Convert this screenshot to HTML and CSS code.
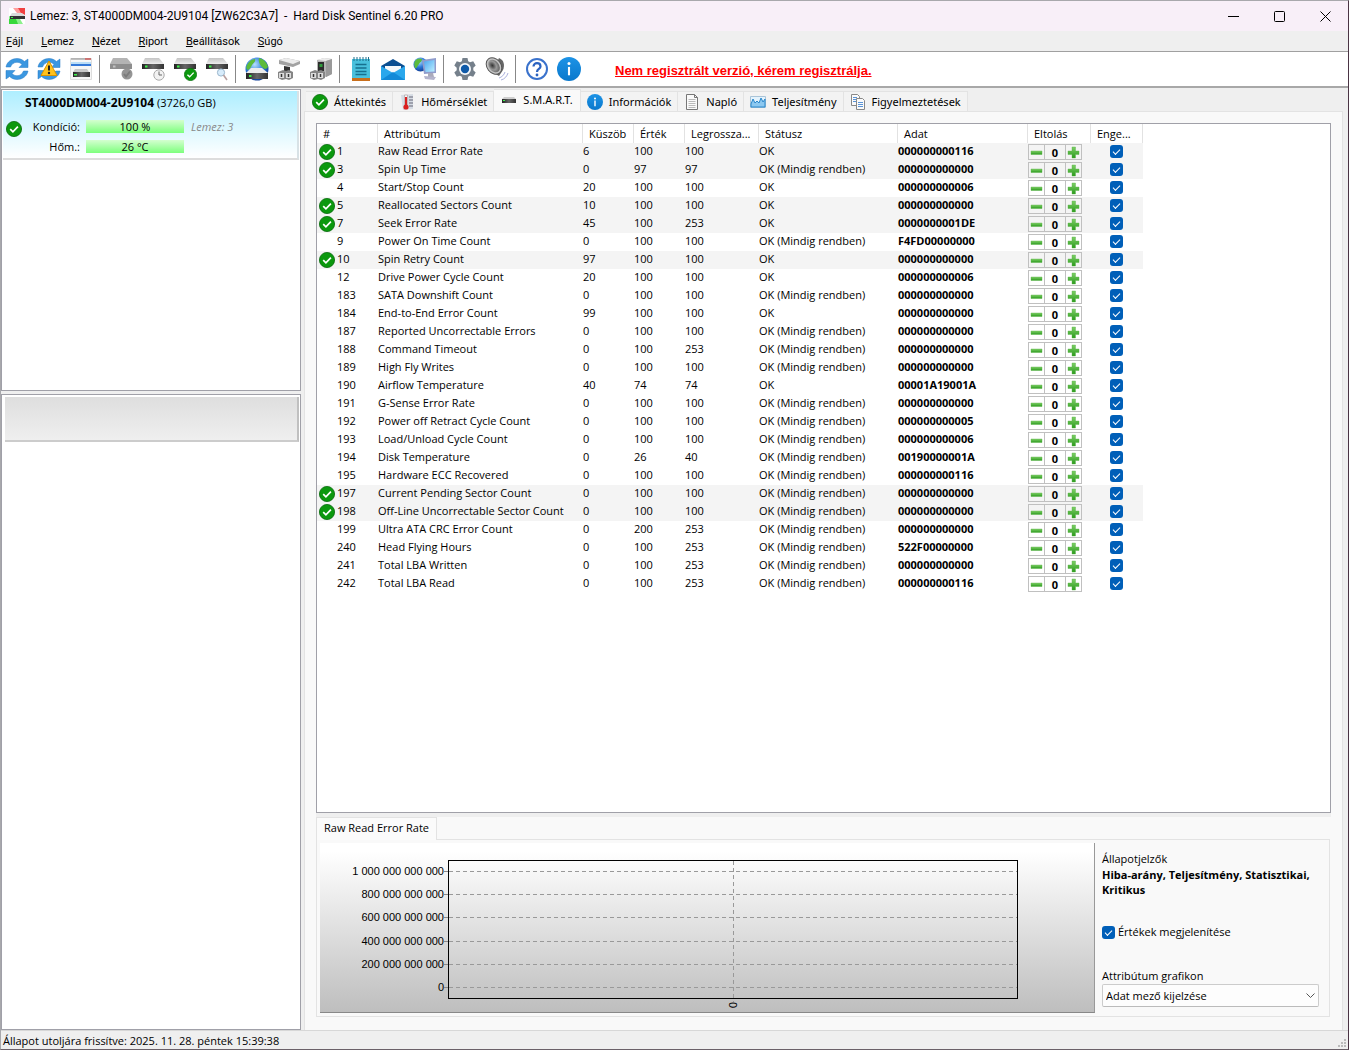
FILE: index.html
```html
<!DOCTYPE html>
<html lang="hu">
<head>
    <meta charset="UTF-8">
    <meta name="viewport" content="width=device-width, initial-scale=1.0">
    <title>Hard Disk Sentinel 6.20 PRO</title>
    <link rel="stylesheet" href="styles.css">
</head>
<body>
    <!-- Shared icons -->
    <svg class="sprite" aria-hidden="true">
        <defs>
            <linearGradient id="gTop" x1="0" y1="0" x2="0" y2="1"><stop offset="0" stop-color="#c4c4c4"/><stop offset="1" stop-color="#ececec"/></linearGradient>
            <linearGradient id="gFront" x1="0" y1="0" x2="1" y2="0"><stop offset="0" stop-color="#222"/><stop offset="0.5" stop-color="#666"/><stop offset="1" stop-color="#333"/></linearGradient>
            <linearGradient id="gGreen" x1="0" y1="0" x2="0" y2="1"><stop offset="0" stop-color="#7fd068"/><stop offset="1" stop-color="#2a9a1c"/></linearGradient>
            <linearGradient id="gInfo" x1="0" y1="0" x2="0" y2="1"><stop offset="0" stop-color="#1d93e6"/><stop offset="1" stop-color="#0a78cc"/></linearGradient>
            <radialGradient id="gGlobe" cx="0.4" cy="0.3" r="0.8"><stop offset="0" stop-color="#b5e0ff"/><stop offset="0.5" stop-color="#2a78d8"/><stop offset="1" stop-color="#0b2f86"/></radialGradient>
            <linearGradient id="gScreen" x1="0" y1="0" x2="1" y2="1"><stop offset="0" stop-color="#4aa6f0"/><stop offset="1" stop-color="#bdf0ff"/></linearGradient>
            <radialGradient id="gCone" cx="0.4" cy="0.4" r="0.7"><stop offset="0" stop-color="#333"/><stop offset="0.5" stop-color="#999"/><stop offset="1" stop-color="#555"/></radialGradient>
        </defs>
        <symbol id="ok" viewBox="0 0 16 16"><circle cx="8" cy="8" r="7.6" fill="#0b980e" stroke="#076b0c" stroke-width="0.8"/><path d="M4.2 8.2l2.7 2.7 5-5.2" fill="none" stroke="#fff" stroke-width="1.7"/></symbol>
        <symbol id="info" viewBox="0 0 16 16"><circle cx="8" cy="8" r="8" fill="url(#gInfo)"/><circle cx="8" cy="4.4" r="1" fill="#fff"/><path d="M8 6.6v5.6" stroke="#fff" stroke-width="1.4"/></symbol>
        <symbol id="drive" viewBox="0 0 24 24"><path d="M4 1h14l5 6H1z" fill="url(#gTop)"/><path d="M1 7h22v5H1z" fill="url(#gFront)"/><path d="M4 8.500h2.500v2H4z" fill="#3df04a"/></symbol>
        <symbol id="refresh" viewBox="0 0 24 24"><path d="M1 10C2 4.500 7 1.500 12 1.500c3 0 5.500 1.200 7.400 3L23 2v8.500h-9l3-3C15.500 6 14 5.300 12 5.300c-3 0-5.500 1.700-6.500 4.700zM23 14c-1 5.500-6 8.500-11 8.500-3 0-5.500-1.200-7.400-3L1 22v-8.500h9l-3 3c1.500 1.500 3 2.200 5 2.200 3 0 5.500-1.700 6.500-4.700z" fill="#3b97e0" stroke="#2479c4" stroke-width="0.5"/></symbol>
        <symbol id="minus" viewBox="0 0 13 13"><path d="M1 5h11v3.500H1z" fill="url(#gGreen)" stroke="#57b344" stroke-width="0.4"/></symbol>
        <symbol id="plus" viewBox="0 0 13 13"><path d="M5 1h3.500v4H12v3.500H8.500V12H5V8.500H1V5h4z" fill="url(#gGreen)" stroke="#57b344" stroke-width="0.4"/></symbol>
        <symbol id="plug" viewBox="0 0 24 24"><path d="M1 15l5-2 3 1 3-1 4 2v6l-4 2-3-1-4 1-4-2z" fill="#858585"/><path d="M2 16h5v5H2zM9 16h5v5H9z" fill="#dcdcdc"/><path d="M4.500 17v3M11.500 17v3" stroke="#333" stroke-width="1.500"/></symbol>
    </svg>

    <header class="titlebar">
        <svg class="app-icon" viewBox="0 0 16 16"><path d="M0 0h16v16H0z" fill="#fff"/><path d="M4 0h12v6L8 5z" fill="#ff9c9c"/><path d="M9 0h7v7L12 5z" fill="#f04040"/><path d="M0 8v8h14l-3-5z" fill="#8cf08c"/><path d="M0 11v5h9l-2-5z" fill="#38d83c"/><path d="M3 5h10l3 3H1z" fill="#dadada"/><path d="M1 8h15v3H1z" fill="#333"/><path d="M2 9h2v1H2z" fill="#3df04a"/></svg>
        <h1 class="title">Lemez: 3, ST4000DM004-2U9104 [ZW62C3A7]&nbsp; -&nbsp; Hard Disk Sentinel 6.20 PRO</h1>
        <div class="window-buttons">
            <button class="window-button" aria-label="Kis méret"><svg viewBox="0 0 11 11"><path d="M0 5.500h11" stroke="#000"/></svg></button>
            <button class="window-button" aria-label="Teljes méret"><svg viewBox="0 0 11 11"><rect x="0.5" y="0.5" width="10" height="10" rx="1" fill="none" stroke="#000"/></svg></button>
            <button class="window-button" aria-label="Bezárás"><svg viewBox="0 0 11 11"><path d="M0.500 0.500l10 10M10.500 0.500l-10 10" stroke="#000"/></svg></button>
        </div>
    </header>

    <nav class="menu">
        <button class="menu-item"><u>F</u>ájl</button>
        <button class="menu-item"><u>L</u>emez</button>
        <button class="menu-item"><u>N</u>ézet</button>
        <button class="menu-item"><u>R</u>iport</button>
        <button class="menu-item"><u>B</u>eállítások</button>
        <button class="menu-item"><u>S</u>úgó</button>
    </nav>

    <div class="toolbar">
        <button class="tool" aria-label="Frissítés"><svg viewBox="0 0 24 24"><use href="#refresh"/></svg></button>
        <button class="tool" aria-label="Figyelmeztetések frissítése"><svg viewBox="0 0 24 24"><use href="#refresh"/><path d="M12 4l8 14.500H4z" fill="#ffc21c" stroke="#d99400" stroke-linejoin="round"/><path d="M12 8.500v5" stroke="#222" stroke-width="2"/><circle cx="12" cy="16" r="1.200" fill="#222"/></svg></button>
        <button class="tool" aria-label="Áttekintés"><svg viewBox="0 0 24 24"><path d="M1.500 1.500h21v21h-21z" fill="#f6f6f6" stroke="#ddd"/><path d="M2 2h20" stroke="#888"/><path d="M16 2h6" stroke="#e03030"/><path d="M2 7h20v2H2z" fill="#3478d8"/><path d="M2 6h20" stroke="#7fc4f8"/><path d="M6 12h12l2 3H4z" fill="#c8c8c8"/><path d="M4 15h17v5H4z" fill="url(#gFront)"/><path d="M5 17h3v1.500H5z" fill="#3df04a"/></svg></button>
        <span class="separator"></span>
        <button class="tool" aria-label="Lemez művelet" disabled><svg viewBox="0 0 24 24"><path d="M4 1h14l5 6H1z" fill="#b4b4b4"/><path d="M1 7h22v5H1z" fill="#8e8e8e"/><path d="M4 8.500h2.500v2H4z" fill="#c4c4c4"/><circle cx="18" cy="17" r="5.500" fill="#959595"/><path d="M15 17l2 2.500 4-5" fill="none" stroke="#7c7c7c" stroke-width="2"/></svg></button>
        <button class="tool" aria-label="Ütemezett teszt"><svg viewBox="0 0 24 24"><use href="#drive"/><circle cx="18" cy="18" r="5.200" fill="#f2f2f2" stroke="#aaa"/><path d="M18 14.500V18h3" fill="none" stroke="#666"/></svg></button>
        <button class="tool" aria-label="Rövid teszt"><svg viewBox="0 0 24 24"><use href="#drive"/><use href="#ok" x="11" y="11" width="13" height="13"/></svg></button>
        <button class="tool" aria-label="Felület teszt"><svg viewBox="0 0 24 24"><use href="#drive"/><circle cx="16" cy="15.500" r="3.600" fill="#d8ecfb" stroke="#9ab6cc"/><path d="M18.500 18l3.500 5" stroke="#b9a0a0" stroke-width="1.600"/></svg></button>
        <span class="separator"></span>
        <button class="tool" aria-label="Hálózati lemez"><svg viewBox="0 0 24 24"><circle cx="12" cy="12" r="11.500" fill="url(#gGlobe)"/><path d="M2 8c2-4 5-6 8-6 1 3-2 4-3 6s-2 4-4 5c-2-1-2-3-1-5zM14 1c5 1 8 5 9 9-2 3-4 2-6 0s-4-5-3-9z" fill="#5cbb3c"/><path d="M6 11h11l6 5H1z" fill="#ececec"/><path d="M1 16h22v6H1z" fill="url(#gFront)"/><path d="M4 18h2.500v2H4z" fill="#3df04a"/></svg></button>
        <button class="tool" aria-label="Csatlakozó"><svg viewBox="0 0 24 24"><path d="M2 3l7-2 14 3v3l-7 3L2 7z" fill="#a2a2a2"/><path d="M2 3l7-2 14 3-7 3z" fill="#ececec"/><path d="M7 9l6 1v5H7z" fill="#333"/><use href="#plug"/></svg></button>
        <button class="tool" aria-label="Tápegység"><svg viewBox="0 0 24 24"><path d="M8 3l7-2 8 1v15l-6 3-9-3z" fill="#b4b4b4"/><path d="M8 3l7-2 8 1-6 2z" fill="#ececec"/><path d="M17 4l6-2v15l-6 3z" fill="#9a9a9a"/><path d="M9 5h6v9H9z" fill="#2c2c2c"/><path d="M10.500 7h3v3h-3z" fill="#2f9c3c"/><use href="#plug"/></svg></button>
        <span class="separator"></span>
        <button class="tool" aria-label="Jegyzet"><svg viewBox="0 0 24 24"><path d="M3 2h18v19H3z" fill="#49c0dc"/><path d="M3 21h18v3H3z" fill="#c86f1c"/><path d="M5 0v4M8 0v4M11 0v4M14 0v4M17 0v4M19.500 0v4" stroke="#1d6f8c"/><path d="M6.500 7.500h11M6.500 11h11M6.500 14.500h11M6.500 17.500h11" stroke="#17708e" stroke-width="1.300"/></svg></button>
        <button class="tool" aria-label="E-mail"><svg viewBox="0 0 24 24"><path d="M0 9l12-7 12 7v5H0z" fill="#0c4f92"/><path d="M4 9h16v5l-8 5-8-5z" fill="#f5f8fb"/><path d="M0 9l12 7 12-7v14H0z" fill="#2aa7ec"/><path d="M0 23l12-8 12 8z" fill="#1289d8"/></svg></button>
        <button class="tool" aria-label="Hálózat"><svg viewBox="0 0 24 24"><circle cx="7.500" cy="7.500" r="7" fill="url(#gGlobe)"/><path d="M2 4c2-3 5-3 7-2 0 3-2 3-3 5-2 2-2 5-4 4-1-3-1-5 0-7z" fill="#5cbb3c"/><path d="M9 3l14-2v15l-12 1z" fill="#8f9ccc"/><path d="M11 4.500l10.500-1.500v11.500L12.500 15z" fill="url(#gScreen)"/><path d="M15 16h5l1 4h-6z" fill="#aab"/><path d="M11 19l12 1-2 3-9-1z" fill="#b4b4cc"/></svg></button>
        <span class="separator"></span>
        <button class="tool" aria-label="Beállítások"><svg viewBox="0 0 24 24"><path d="M9.500 1h5l.7 3.200 1.800 1 3.200-1 2.500 4.200-2.400 2.300v2.600l2.400 2.300-2.500 4.200-3.200-1-1.800 1-.7 3.200h-5l-.7-3.200-1.800-1-3.200 1-2.500-4.200 2.400-2.300v-2.600L1.300 8.400l2.500-4.200 3.200 1 1.800-1z" fill="#75808b"/><circle cx="12" cy="12" r="6" fill="#f4f7fa"/><circle cx="12" cy="12" r="4.200" fill="#0f5aa8"/></svg></button>
        <button class="tool" aria-label="Hang"><svg viewBox="0 0 24 24"><path d="M14 1c5 2 6 7 4 12l-4 6-7-4z" fill="#666"/><ellipse cx="9" cy="9" rx="7" ry="9" transform="rotate(-38 9 9)" fill="#c4c4c4" stroke="#555"/><ellipse cx="9" cy="9" rx="5" ry="7" transform="rotate(-38 9 9)" fill="url(#gCone)"/><path d="M14 21c3-1 5-3 6-6M16 23c4-1 6-4 7-7" fill="none" stroke="#aab0dd"/></svg></button>
        <span class="separator"></span>
        <button class="tool" aria-label="Súgó"><svg viewBox="0 0 24 24"><circle cx="12" cy="12" r="10" fill="#fff" stroke="#3a72cc" stroke-width="2"/><path d="M8.500 9.500c0-4.500 7-4.500 7 0 0 2.500-3.500 2.500-3.500 5.500" fill="none" stroke="#2a62c0" stroke-width="2.200"/><circle cx="12" cy="18" r="1.400" fill="#2a62c0"/></svg></button>
        <button class="tool" aria-label="Névjegy"><svg viewBox="0 0 16 16"><use href="#info"/></svg></button>
        <a class="register" href="#">Nem regisztrált verzió, kérem regisztrálja.</a>
    </div>

    <main class="main">
        <aside class="sidebar">
            <section class="disk-list">
                <div class="disk">
                    <div class="disk-name"><b>ST4000DM004-2U9104</b> (3726,0 GB)</div>
                    <div class="disk-info">
                        <svg class="disk-state" viewBox="0 0 16 16"><use href="#ok"/></svg>
                        <div class="disk-values">
                            <span class="disk-label">Kondíció:</span><span class="bar">100 %</span><i class="disk-note">Lemez: 3</i>
                            <span class="disk-label">Hőm.:</span><span class="bar">26 °C</span>
                        </div>
                    </div>
                </div>
            </section>
            <section class="partition-list">
                <div class="partition"></div>
            </section>
        </aside>

        <div class="content">
            <div class="tabs" role="tablist">
                <button class="tab" role="tab"><svg viewBox="0 0 16 16"><use href="#ok"/></svg>Áttekintés</button>
                <button class="tab" role="tab"><svg viewBox="0 0 16 16"><path d="M2 1l12-1v15L4 16z" fill="#d6dce4"/><path d="M10 3h4M10 6h4M10 9h4M10 12h4" stroke="#667"/><path d="M5.500 1h3v10h-3z" fill="#f7f7f7" stroke="#a99" stroke-width="0.600"/><path d="M6 3h2v9H6z" fill="#d92020"/><circle cx="7" cy="13" r="2.600" fill="#d92020"/></svg>Hőmérséklet</button>
                <button class="tab tab-active" role="tab" aria-selected="true"><svg viewBox="0 0 16 16"><path d="M3 5h10l2 2H1z" fill="#cfcfcf"/><path d="M1 7h14v4H1z" fill="url(#gFront)"/><path d="M2 8h2v1H2z" fill="#3df04a"/></svg>S.M.A.R.T.</button>
                <button class="tab" role="tab"><svg viewBox="0 0 16 16"><use href="#info"/></svg>Információk</button>
                <button class="tab" role="tab"><svg viewBox="0 0 16 16"><path d="M2.500.500h8l3 3v12h-11z" fill="#fafafa" stroke="#777"/><path d="M10.500.500v3h3" fill="none" stroke="#777"/><path d="M4.500 5.500h7M4.500 7.500h7M4.500 9.500h7M4.500 11.500h7M4.500 13.500h7" stroke="#aaa" stroke-width="0.800"/></svg>Napló</button>
                <button class="tab" role="tab"><svg viewBox="0 0 16 16"><path d="M.500 2.500h15v11H.500z" fill="#e4f3fd" stroke="#a9c4d8"/><path d="M1 10l2-5 2 4 2-2 2 2 2-5 2 4 2-3v8H1z" fill="#8cc8f0" stroke="#2b88cc"/></svg>Teljesítmény</button>
                <button class="tab" role="tab"><svg viewBox="0 0 16 16"><path d="M1.500.500h6l2 2v9h-8z" fill="#fafafa" stroke="#888"/><path d="M3 3.500h4M3 5.500h4M3 7.500h4" stroke="#5a94d8"/><path d="M6.500 4.500h6l2 2v9h-8z" fill="#fafafa" stroke="#888"/><path d="M8 8.500h5M8 10.500h5M8 12.500h5" stroke="#5a94d8"/></svg>Figyelmeztetések</button>
            </div>

            <div class="page">
                <div class="smart">
                    <table class="smart-table">
                        <colgroup>
                            <col class="col-id"><col class="col-name"><col class="col-num"><col class="col-num"><col class="col-worst"><col class="col-status"><col class="col-data"><col class="col-offset"><col class="col-enable">
                        </colgroup>
                        <thead>
                            <tr><th>#</th><th>Attribútum</th><th>Küszöb</th><th>Érték</th><th>Legrossza...</th><th>Státusz</th><th>Adat</th><th>Eltolás</th><th>Enge...</th></tr>
                        </thead>
                        <tbody id="smartRows"></tbody>
                    </table>
                </div>

                <section class="details">
                    <div class="details-head">
                        <button class="details-tab">Raw Read Error Rate</button>
                    </div>
                    <div class="details-body">
                        <div class="chart">
                            <div class="y-axis">
                                <span>1 000 000 000 000</span>
                                <span>800 000 000 000</span>
                                <span>600 000 000 000</span>
                                <span>400 000 000 000</span>
                                <span>200 000 000 000</span>
                                <span>0</span>
                            </div>
                            <div class="ticks"><i></i><i></i><i></i><i></i><i></i><i></i></div>
                            <div class="plot-column">
                                <div class="plot">
                                    <i class="line"></i><i class="line"></i><i class="line"></i><i class="line"></i><i class="line"></i><i class="line"></i>
                                    <i class="cursor"></i>
                                </div>
                                <span class="x-label">0</span>
                            </div>
                        </div>
                        <div class="options">
                            <div>Állapotjelzők</div>
                            <b class="flags">Hiba-arány, Teljesítmény, Statisztikai, Kritikus</b>
                            <label class="show-values"><input type="checkbox" class="check" checked>Értékek megjelenítése</label>
                            <label for="graphType">Attribútum grafikon</label>
                            <div class="select">
                                <select id="graphType"><option>Adat mező kijelzése</option></select>
                                <svg class="arrow" viewBox="0 0 9 9"><path d="M.500 2.500l4 4 4-4" fill="none" stroke="#555"/></svg>
                            </div>
                        </div>
                    </div>
                </section>
            </div>
        </div>
    </main>

    <footer class="statusbar">
        <span>Állapot utoljára frissítve: 2025. 11. 28. péntek 15:39:38</span>
        <svg class="grip" viewBox="0 0 9 9"><path d="M7 1h2v2H7zM4 4h2v2H4zM7 4h2v2H7zM1 7h2v2H1zM4 7h2v2H4zM7 7h2v2H7z" fill="#bbb"/></svg>
    </footer>

    <script src="script.js"></script>
</body>
</html>
```

FILE: styles.css
```css
* {
    box-sizing: border-box;
}
body {
    margin: 0;
    height: 100vh;
    display: flex;
    flex-direction: column;
    font-family: "Open Sans", "Noto Sans", sans-serif;
    font-size: 11px;
    line-height: 16px;
    color: #000;
    background-color: #efefef;
    border: 1px solid #a8a8ac;
    border-right-color: #4a3444;
    border-bottom-color: #6a6068;
    overflow: hidden;
}
button, input, select {
    font: inherit;
    color: inherit;
    margin: 0;
    padding: 0;
    border: 0;
    background: none;
}
.sprite {
    position: absolute;
    width: 0;
    height: 0;
}

/* Title and menu */
.titlebar {
    display: flex;
    align-items: center;
    height: 30px;
    padding-left: 8px;
    background-color: #f8eff8;
}
.app-icon {
    width: 16px;
    height: 16px;
    margin-right: 5px;
}
.title {
    margin: 0;
    font-family: Roboto, sans-serif;
    font-size: 12px;
    font-weight: normal;
}
.window-buttons {
    display: flex;
    margin-left: auto;
}
.window-button {
    width: 46px;
    height: 30px;
}
.window-button svg {
    width: 11px;
    height: 11px;
    display: block;
    margin: auto;
}
.menu {
    display: flex;
    gap: 18px;
    height: 20px;
    padding: 2px 5px 0;
    font-family: Roboto, sans-serif;
}

/* Toolbar */
.toolbar {
    display: flex;
    align-items: center;
    height: 37px;
    background-color: #fff;
    border-top: 1px solid #a0a0a0;
    border-bottom: 2px solid #a8a8a8;
}
.tool {
    width: 32px;
    height: 32px;
}
.tool svg {
    display: block;
    width: 24px;
    height: 24px;
    margin: auto;
}
.separator {
    width: 8px;
    height: 28px;
    border-left: 1px solid #888;
    margin-left: 2px;
    margin-right: -2px;
}
.register {
    margin-left: 30px;
    padding-top: 4px;
    font-family: "Liberation Sans", Arial, sans-serif;
    font-size: 13px;
    font-weight: bold;
    color: #f00;
}

.main {
    flex: 1;
    display: flex;
    min-height: 0;
    padding-top: 1px;
}

/* Left side */
.sidebar {
    width: 300px;
    flex: none;
    display: flex;
    flex-direction: column;
    gap: 3px;
}
.disk-list, .partition-list {
    background-color: #fff;
    border: 1px solid #a0a0a8;
    padding: 1px;
}
.disk-list {
    height: 302px;
}
.partition-list {
    flex: 1;
    padding-top: 2px;
}
.disk {
    height: 69px;
    padding: 4px 0 0 3px;
    background: linear-gradient(#aeeeff, #fff);
    border-right: 2px solid #d8e2e6;
    border-bottom: 2px solid #ddd;
}
.disk-name {
    padding-left: 19px;
}
.disk-name b {
    font-size: 12px;
}
.disk-info {
    display: flex;
    align-items: center;
    gap: 6px;
    padding-top: 8px;
}
.disk-state {
    width: 16px;
    height: 16px;
    margin-bottom: 16px;
}
.disk-values {
    display: grid;
    grid-template-columns: 52px 98px auto;
    gap: 4px 6px;
}
.disk-label {
    text-align: right;
}
.bar {
    height: 13px;
    line-height: 13px;
    margin-top: 1px;
    text-align: center;
    background: linear-gradient(#d4ffd0, #7dff7d);
}
.disk-note {
    color: #888;
    padding-left: 1px;
}
.partition {
    height: 45px;
    margin-left: 2px;
    background: linear-gradient(#dedede, #efefef);
    border-right: 2px solid #c0c0c0;
    border-bottom: 2px solid #ccc;
}

/* Tabs */
.content {
    flex: 1;
    min-width: 0;
    display: flex;
    flex-direction: column;
    padding: 0 5px 0 3px;
}
.tabs {
    display: flex;
    align-items: flex-end;
    height: 22px;
    padding-left: 2px;
    font-family: "Noto Sans", sans-serif;
}
.tab {
    display: flex;
    align-items: center;
    gap: 6px;
    height: 20px;
    padding: 0 6px;
    background-color: #f3f3f3;
    border: 1px solid #e3e3e3;
    border-bottom: 0;
    border-left-width: 0;
}
.tab svg {
    width: 16px;
    height: 16px;
}
.tab-active {
    height: 23px;
    margin-bottom: -1px;
    padding: 0 7px 3px;
    background-color: #f9f9f9;
}
.page {
    flex: 1;
    min-height: 0;
    display: flex;
    flex-direction: column;
    padding: 11px 11px 13px;
    background-color: #f9f9f9;
    border: 1px solid #e3e3e3;
    border-bottom: 0;
}

/* Attribute table */
.smart {
    flex: 1;
    min-height: 0;
    overflow: hidden;
    background-color: #fff;
    border: 1px solid #a0a0a8;
}
.smart-table {
    table-layout: fixed;
    width: 826px;
    border-spacing: 0;
}
.col-id {
    width: 61px;
}
.col-name {
    width: 205px;
}
.col-num {
    width: 51px;
}
.col-worst {
    width: 74px;
}
.col-status {
    width: 139px;
}
.col-data {
    width: 130px;
}
.col-offset {
    width: 63px;
}
.col-enable {
    width: 52px;
}
th {
    height: 19px;
    padding: 0 0 0 6px;
    text-align: left;
    font-weight: normal;
    border-right: 1px solid #e2e2e2;
    white-space: nowrap;
}
td {
    height: 18px;
    padding: 0;
    line-height: 15px;
    vertical-align: top;
    white-space: nowrap;
}
.marked {
    background-color: #f4f4f4;
}
.id-cell {
    display: flex;
    height: 18px;
    padding-left: 20px;
}
.id-cell svg {
    width: 16px;
    height: 16px;
    margin: 1px 2px 0 -18px;
}
.data {
    font-weight: bold;
}
.offset {
    display: flex;
    height: 16px;
    width: 54px;
    margin-top: 1px;
    border: 1px solid #c0c0c0;
}
.offset button {
    width: 15px;
}
.offset svg {
    display: block;
    width: 13px;
    height: 13px;
    margin: auto;
}
.offset input {
    width: 22px;
    height: 14px;
    text-align: center;
    font-weight: bold;
    border: 1px solid #c0c0c0;
    border-width: 0 1px;
}
.check {
    appearance: none;
    display: flex;
    flex: none;
    width: 13px;
    height: 13px;
    border-radius: 3px;
    background-color: #005fb8;
}
.check::before {
    content: "";
    width: 6px;
    height: 3px;
    margin: 4px auto;
    border: solid #fff;
    border-width: 0 0 1px 1px;
    transform: rotate(-45deg);
}
td .check {
    margin: 2px 0 0 19px;
}

/* Details of the selected attribute */
.details {
    border-top: 4px solid #efefef;
}
.details-head {
    display: flex;
}
.details-tab {
    height: 23px;
    margin-bottom: -1px;
    padding: 0 7px 2px;
    background-color: #fbfbfb;
    border: 1px solid #e3e3e3;
    border-bottom: 0;
    z-index: 1;
}
.details-body {
    display: flex;
    margin-right: 1px;
    height: 178px;
    padding: 3px;
    border: 1px solid #e3e3e3;
}
.chart {
    flex: 1;
    display: flex;
    padding: 17px 76px 0 0;
    background: linear-gradient(#fff 5%, #bebebe);
    border-right: 1px solid #999;
    border-bottom: 1px solid #888;
    font-family: "Liberation Sans", Arial, sans-serif;
}
.y-axis {
    width: 124px;
    height: 139px;
    display: flex;
    flex-direction: column;
    justify-content: space-between;
    text-align: right;
    line-height: 23px;
}
.ticks {
    width: 4px;
    height: 128px;
    padding-top: 11px;
    display: flex;
    flex-direction: column;
    justify-content: space-between;
}
.ticks i {
    height: 1px;
    background-color: #888;
}
.plot-column {
    flex: 1;
    display: flex;
    flex-direction: column;
    align-items: center;
}
.plot {
    position: relative;
    width: 100%;
    height: 139px;
    padding: 10px 0;
    display: flex;
    flex-direction: column;
    justify-content: space-between;
    border: 1px solid #000;
}
.line {
    height: 1px;
    background: repeating-linear-gradient(90deg, #999 0 4px, transparent 4px 7px);
}
.cursor {
    position: absolute;
    top: 0;
    bottom: -4px;
    left: 50%;
    width: 1px;
    background: repeating-linear-gradient(#999 0 4px, transparent 4px 7px);
}
.x-label {
    writing-mode: vertical-rl;
    line-height: 12px;
    margin-top: 3px;
}
.options {
    width: 231px;
    padding: 8px 7px 0;
    display: flex;
    flex-direction: column;
}
.flags {
    line-height: 15px;
    height: 30px;
}
.show-values {
    display: flex;
    align-items: center;
    gap: 3px;
    margin: 27px 0 28px;
}
.select {
    display: grid;
    align-items: center;
    width: 217px;
}
.select select {
    grid-area: 1 / 1;
    appearance: none;
    height: 23px;
    padding: 0 3px;
    background-color: #fdfdfd;
    border: 1px solid #ccc;
    border-bottom-color: #bbb;
    border-radius: 2px;
}
.arrow {
    grid-area: 1 / 1;
    justify-self: end;
    width: 9px;
    height: 9px;
    margin-right: 4px;
    pointer-events: none;
}

.statusbar {
    display: flex;
    justify-content: space-between;
    align-items: flex-end;
    height: 19px;
    padding: 0 2px;
    border-top: 1px solid #d7d7d7;
}
.grip {
    width: 9px;
    height: 9px;
    margin-bottom: 2px;
}
```

FILE: script.js
```js
const ALWAYS = "OK (Mindig rendben)";

// id, name, threshold, value, worst, status, data, marked
const attributes = [
    [1, "Raw Read Error Rate", 6, 100, 100, "OK", "000000000116", true],
    [3, "Spin Up Time", 0, 97, 97, ALWAYS, "000000000000", true],
    [4, "Start/Stop Count", 20, 100, 100, "OK", "000000000006"],
    [5, "Reallocated Sectors Count", 10, 100, 100, "OK", "000000000000", true],
    [7, "Seek Error Rate", 45, 100, 253, "OK", "0000000001DE", true],
    [9, "Power On Time Count", 0, 100, 100, ALWAYS, "F4FD00000000"],
    [10, "Spin Retry Count", 97, 100, 100, "OK", "000000000000", true],
    [12, "Drive Power Cycle Count", 20, 100, 100, "OK", "000000000006"],
    [183, "SATA Downshift Count", 0, 100, 100, ALWAYS, "000000000000"],
    [184, "End-to-End Error Count", 99, 100, 100, "OK", "000000000000"],
    [187, "Reported Uncorrectable Errors", 0, 100, 100, ALWAYS, "000000000000"],
    [188, "Command Timeout", 0, 100, 253, ALWAYS, "000000000000"],
    [189, "High Fly Writes", 0, 100, 100, ALWAYS, "000000000000"],
    [190, "Airflow Temperature", 40, 74, 74, "OK", "00001A19001A"],
    [191, "G-Sense Error Rate", 0, 100, 100, ALWAYS, "000000000000"],
    [192, "Power off Retract Cycle Count", 0, 100, 100, ALWAYS, "000000000005"],
    [193, "Load/Unload Cycle Count", 0, 100, 100, ALWAYS, "000000000006"],
    [194, "Disk Temperature", 0, 26, 40, ALWAYS, "00190000001A"],
    [195, "Hardware ECC Recovered", 0, 100, 100, ALWAYS, "000000000116"],
    [197, "Current Pending Sector Count", 0, 100, 100, ALWAYS, "000000000000", true],
    [198, "Off-Line Uncorrectable Sector Count", 0, 100, 100, ALWAYS, "000000000000", true],
    [199, "Ultra ATA CRC Error Count", 0, 200, 253, ALWAYS, "000000000000"],
    [240, "Head Flying Hours", 0, 100, 253, ALWAYS, "522F00000000"],
    [241, "Total LBA Written", 0, 100, 253, ALWAYS, "000000000000"],
    [242, "Total LBA Read", 0, 100, 253, ALWAYS, "000000000116"]
];

document.getElementById("smartRows").innerHTML = attributes.map(function (a) {
    const icon = a[7] ? '<svg viewBox="0 0 16 16"><use href="#ok"/></svg>' : "";
    return `<tr class="${a[7] ? "marked" : ""}">
        <td><div class="id-cell">${icon}${a[0]}</div></td>
        <td>${a[1]}</td>
        <td>${a[2]}</td>
        <td>${a[3]}</td>
        <td>${a[4]}</td>
        <td>${a[5]}</td>
        <td class="data">${a[6]}</td>
        <td><div class="offset">
            <button aria-label="Csökkentés"><svg viewBox="0 0 13 13"><use href="#minus"/></svg></button>
            <input type="text" value="0" aria-label="Eltolás, ${a[1]}">
            <button aria-label="Növelés"><svg viewBox="0 0 13 13"><use href="#plus"/></svg></button>
        </div></td>
        <td><input type="checkbox" class="check" aria-label="Engedélyezés, ${a[1]}" checked></td>
    </tr>`;
}).join("");
```
